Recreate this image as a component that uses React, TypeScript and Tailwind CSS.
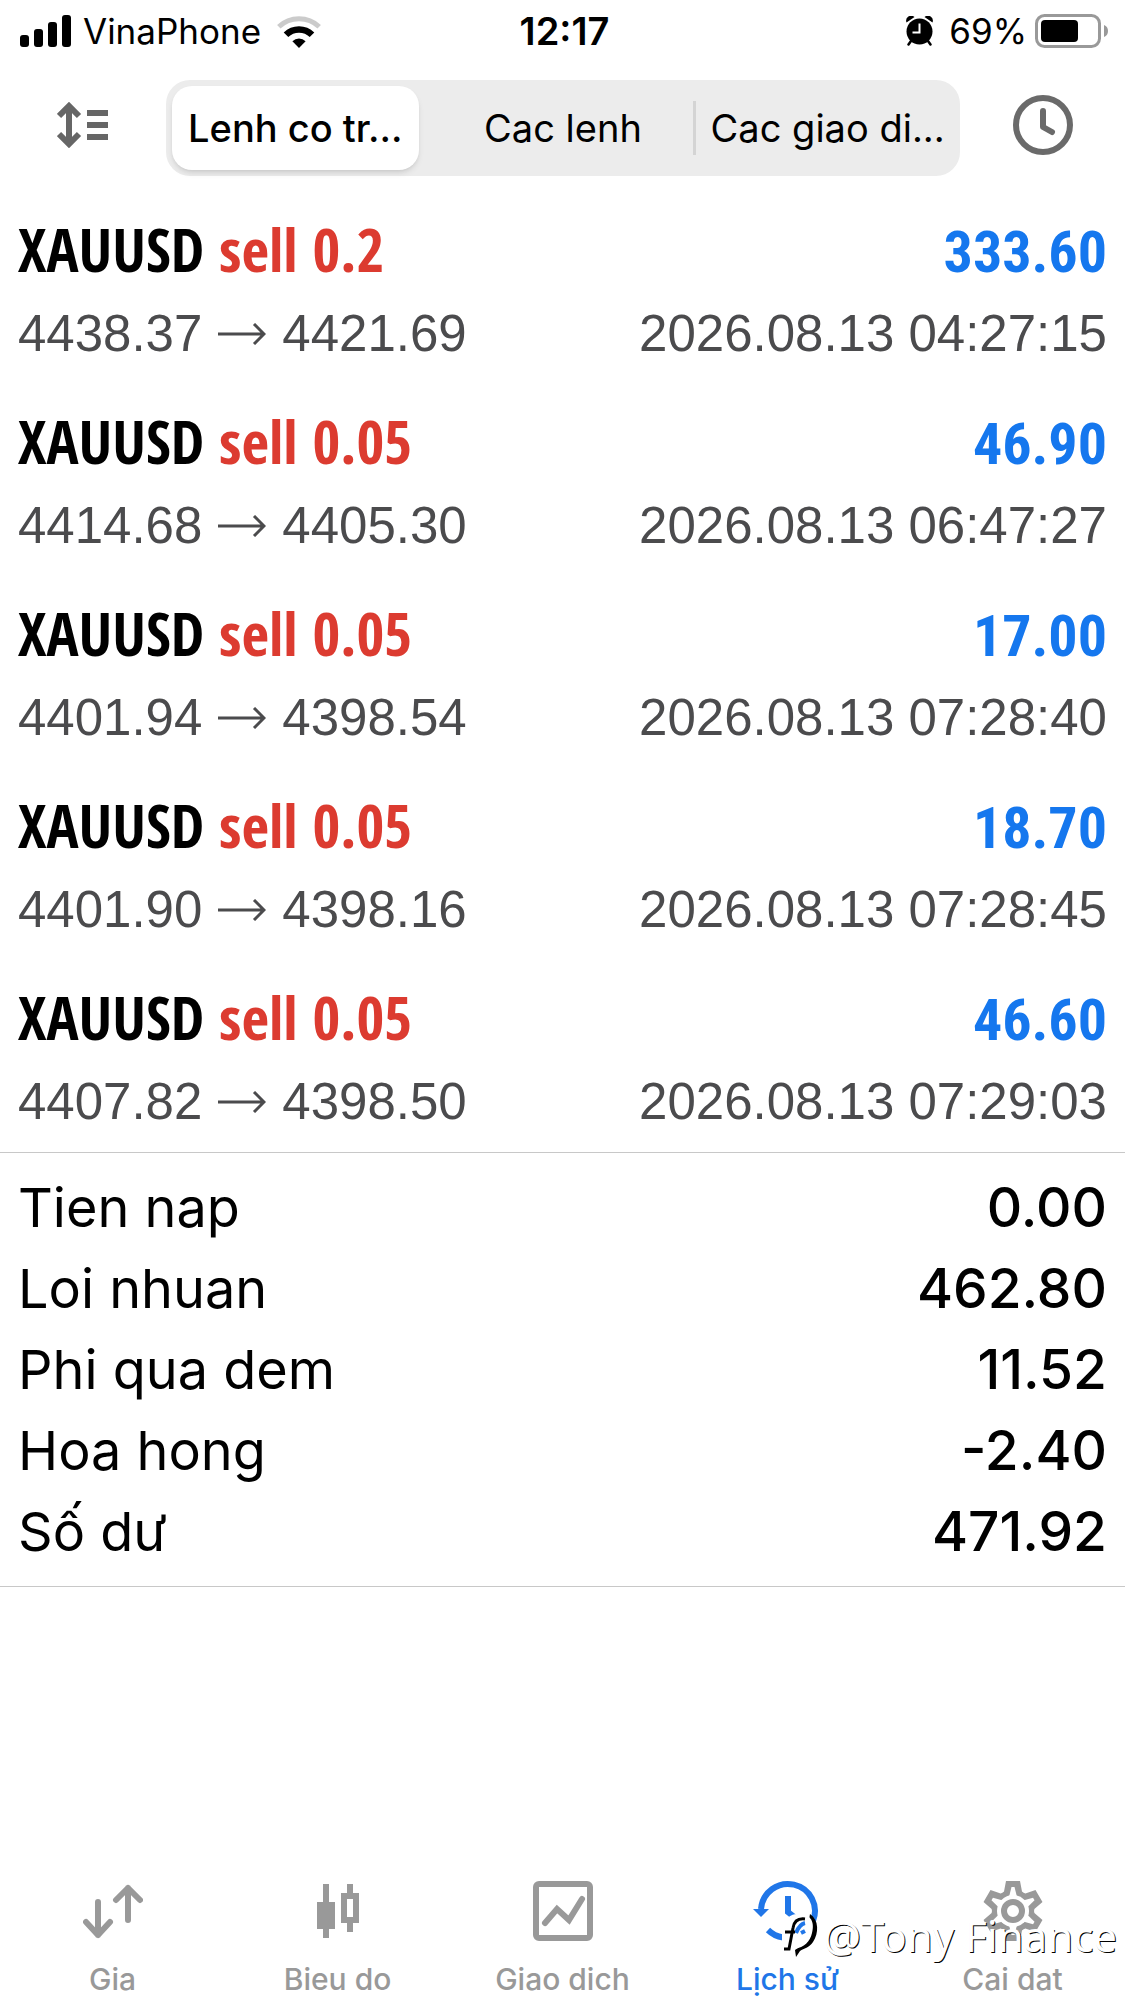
import { useState } from "react";
import type { ReactNode } from "react";

interface Deal {
  symbol: string;
  side: string;
  volume: string;
  open: string;
  close: string;
  time: string;
  profit: string;
}

const deals: Deal[] = [
  { symbol: "XAUUSD", side: "sell", volume: "0.2", open: "4438.37", close: "4421.69", time: "2026.08.13 04:27:15", profit: "333.60" },
  { symbol: "XAUUSD", side: "sell", volume: "0.05", open: "4414.68", close: "4405.30", time: "2026.08.13 06:47:27", profit: "46.90" },
  { symbol: "XAUUSD", side: "sell", volume: "0.05", open: "4401.94", close: "4398.54", time: "2026.08.13 07:28:40", profit: "17.00" },
  { symbol: "XAUUSD", side: "sell", volume: "0.05", open: "4401.90", close: "4398.16", time: "2026.08.13 07:28:45", profit: "18.70" },
  { symbol: "XAUUSD", side: "sell", volume: "0.05", open: "4407.82", close: "4398.50", time: "2026.08.13 07:29:03", profit: "46.60" },
];

const summary = [
  { label: "Tien nap", value: "0.00" },
  { label: "Loi nhuan", value: "462.80" },
  { label: "Phi qua dem", value: "11.52" },
  { label: "Hoa hong", value: "-2.40" },
  { label: "Số dư", value: "471.92" },
];

const segments = ["Lenh co tr...", "Cac lenh", "Cac giao di..."];

function StatusBar() {
  return (
    <div className="grid h-[62px] grid-cols-[1fr_auto_1fr] items-center pr-4 pl-5 text-[35px] leading-[62px]">
      <div className="flex items-center gap-3">
        <svg width="51" height="32" viewBox="0 0 51 32" aria-hidden="true">
          <rect y="20" width="9" height="12" rx="3" />
          <rect x="14" y="14" width="9" height="18" rx="3" />
          <rect x="28" y="7" width="9" height="25" rx="3" />
          <rect x="42" width="9" height="32" rx="3" />
        </svg>
        <span>VinaPhone</span>
        <svg className="ml-1" width="44" height="33" viewBox="0 0 44 33" fill="none" aria-hidden="true">
          <path d="M1.8 11.8A29.5 29.5 0 0 1 42.2 11.8" stroke="#cbcbcb" strokeWidth="5" />
          <path d="M9 19.8A18.5 18.5 0 0 1 35 19.8" stroke="#000" strokeWidth="6.5" />
          <path d="M22 33L15.4 26.2A9.5 9.5 0 0 1 28.6 26.2Z" fill="#000" />
        </svg>
      </div>
      <span className="text-[38px] font-semibold">12:17</span>
      <div className="flex items-center justify-end">
        <svg className="mr-4" width="27" height="30" viewBox="0 0 27 30" aria-hidden="true">
          <path d="M0.5 6.5A5 5 0 0 1 8.5 1ZM26.5 6.5A5 5 0 0 0 18.5 1Z" />
          <circle cx="13.5" cy="15.5" r="13" />
          <path d="M5 25L2.5 28.5M22 25L24.5 28.5" stroke="#000" strokeWidth="2.5" strokeLinecap="round" />
          <path d="M13.5 7.5V16.5H6.5" fill="none" stroke="#fff" strokeWidth="2" />
        </svg>
        <span className="mr-2">69%</span>
        <svg width="74" height="34" viewBox="0 0 74 34" aria-hidden="true">
          <rect x="1.5" y="1.5" width="63" height="31" rx="8" fill="none" stroke="#999" strokeWidth="3" />
          <rect x="6" y="6" width="37" height="22" rx="4" />
          <path d="M69 11A6.5 6.5 0 0 1 69 23Z" fill="#999" />
        </svg>
      </div>
    </div>
  );
}

function Header() {
  const [active, setActive] = useState(0);

  return (
    <header className="grid grid-cols-[166px_1fr_165px] items-start pt-[18px]">
      <button className="flex h-[90px] items-center justify-center" aria-label="Sort">
        <svg width="52" height="46" viewBox="0 0 52 46" fill="none" stroke="#666" strokeWidth="6" aria-hidden="true">
          <path d="M12 4V42M2 14L12 4L22 14M2 32L12 42L22 32M30 11H51M30 23H51M30 35H51" />
        </svg>
      </button>
      <div className="grid h-24 grid-cols-3 rounded-3xl bg-[#ececec]">
        {segments.map((label, i) => (
          <button
            key={label}
            onClick={() => setActive(i)}
            className={`m-[6px] rounded-[20px] text-[38px] whitespace-nowrap ${
              i === active ? "mr-3 bg-white font-medium shadow-md" : ""
            } ${i === 2 ? "relative before:absolute before:top-[15px] before:-left-2 before:h-[54px] before:w-[3px] before:bg-[#d4d4d4]" : ""}`}
          >
            {label}
          </button>
        ))}
      </div>
      <button className="flex h-[90px] items-center justify-center" aria-label="Period">
        <svg width="60" height="60" viewBox="0 0 60 60" fill="none" stroke="#6a6a6a" strokeWidth="6" strokeLinecap="round" strokeLinejoin="round" aria-hidden="true">
          <circle cx="30" cy="30" r="27" />
          <path d="M30 16V32L39 37" />
        </svg>
      </button>
    </header>
  );
}

function DealRow({ deal }: { deal: Deal }) {
  return (
    <li className="h-48 px-[18px] pt-4">
      <div className="flex items-baseline justify-between text-[60px] leading-[82px] font-bold">
        <span className="font-['Open_Sans_Condensed',sans-serif]">
          {deal.symbol}{" "}
          <span className="text-[#dc3b30]">
            {deal.side} {deal.volume}
          </span>
        </span>
        <span className="font-['Roboto_Condensed',sans-serif] text-[58px] text-[#1577ee]">{deal.profit}</span>
      </div>
      <div className="flex justify-between font-['Liberation_Sans',Arial,sans-serif] text-[51px] leading-[82px] text-[#4b4b4d]">
        <span className="flex items-center">
          {deal.open}
          <svg className="mx-4" width="48" height="22" viewBox="0 0 48 22" fill="none" stroke="currentColor" strokeWidth="3" aria-label="to">
            <path d="M0 11H46M36 1L46 11L36 21" />
          </svg>
          {deal.close}
        </span>
        <span>{deal.time}</span>
      </div>
    </li>
  );
}

// one tooth of the gear, repeated every 60 degrees
const toothAngles = [0, 60, 120, 180, 240, 300];

function GearIcon() {
  return (
    <svg width="60" height="60" viewBox="0 0 60 60" aria-hidden="true">
      {toothAngles.map((a) => (
        <path key={a} d="M30 30L15.5 15.2L21 10.5L23 0H37L39 10.5L44.5 15.2Z" fill="currentColor" transform={`rotate(${a} 30 30)`} />
      ))}
      <circle cx="30" cy="30" r="16" fill="#fff" />
      {toothAngles.map((a) => (
        <path key={a} d="M26 16L28.5 6H31.5L34 16Z" fill="#fff" transform={`rotate(${a} 30 30)`} />
      ))}
      <circle cx="30" cy="30" r="9" fill="none" stroke="currentColor" strokeWidth="6" />
    </svg>
  );
}

const tabs: { label: string; icon: ReactNode }[] = [
  {
    label: "Gia",
    icon: (
      <svg width="60" height="60" viewBox="0 0 60 60" fill="none" stroke="currentColor" strokeWidth="6" strokeLinecap="round" strokeLinejoin="round" aria-hidden="true">
        <path d="M15 21V54M3 41L15 54L27 41M45 39V7M33 19L45 7L57 19" />
      </svg>
    ),
  },
  {
    label: "Bieu do",
    icon: (
      <svg width="60" height="60" viewBox="0 0 60 60" fill="currentColor" aria-hidden="true">
        <path d="M15 3H21V21H27V48H21V57H15V48H9V21H15Z" />
        <path fillRule="evenodd" d="M39 3H45V12H51V42H45V51H39V42H33V12H39ZM39 18V36H45V18Z" />
      </svg>
    ),
  },
  {
    label: "Giao dich",
    icon: (
      <svg width="60" height="60" viewBox="0 0 60 60" fill="none" stroke="currentColor" strokeWidth="6" strokeLinecap="round" aria-hidden="true">
        <rect x="3" y="3" width="54" height="54" rx="3" />
        <path d="M12 42L24 28L36 39L49 18" />
      </svg>
    ),
  },
  {
    label: "Lịch sử",
    icon: (
      <svg className="overflow-visible" width="60" height="60" viewBox="0 0 60 60" fill="none" stroke="currentColor" strokeWidth="6" aria-hidden="true">
        <path d="M3 28A27 27 0 1 1 55 40" />
        <path d="M10 49A27 27 0 0 0 25 56.5" />
        <path d="M30 15V31L40 39" />
        <path d="M-5 28H11L3 36Z" fill="currentColor" stroke="none" />
      </svg>
    ),
  },
  { label: "Cai dat", icon: <GearIcon /> },
];

function TabBar() {
  return (
    <nav className="relative mt-auto grid grid-cols-5">
      {tabs.map((tab) => (
        <a
          key={tab.label}
          href="#"
          className={`flex flex-col items-center text-[30px] leading-[44px] font-medium ${
            tab.label === "Lịch sử" ? "text-[#2076e8]" : "text-[#999]"
          }`}
        >
          {tab.icon}
          <span className="mt-4">{tab.label}</span>
        </a>
      ))}
      <div className="pointer-events-none absolute right-2 bottom-[42px] flex items-center">
        <svg className="mr-1" width="38" height="46" viewBox="0 0 38 46" aria-hidden="true">
          <path d="M29 1C38 7 38 20 32 29C28 35 23 35 19 38L15 44L14 37L24 30Z" fill="#000" />
          <path d="M16 1C30 0 34 9 31 20C29 29 23 34 14 36L1 32V12C5 5 10 1 16 1Z" fill="#fff" />
          <path d="M24 10C19 11 17 15 15 20M24 18L20 20" fill="none" stroke="#2076e8" strokeWidth="4" />
          <path d="M24 6C16 5 13 9 12 15L8 36H3M4 19H14" fill="none" stroke="#000" strokeWidth="3" />
        </svg>
        <span className="font-['Noto_Sans',sans-serif] text-[42px] leading-[42px] text-white [text-shadow:1px_1px_0_#000]">
          @Tony Finance
        </span>
      </div>
    </nav>
  );
}

export default function App() {
  return (
    <div className="flex min-h-screen flex-col bg-white font-['Inter',sans-serif] text-black">
      <StatusBar />
      <Header />
      <main className="pt-4">
        <ul>
          {deals.map((deal) => (
            <DealRow key={deal.time} deal={deal} />
          ))}
        </ul>
        <dl className="border-y border-[#c8c8c8] px-[18px] py-[14px] text-[55px] leading-[81px]">
          {summary.map((row) => (
            <div key={row.label} className="flex justify-between">
              <dt className="text-[54px]">{row.label}</dt>
              <dd className="font-medium">{row.value}</dd>
            </div>
          ))}
        </dl>
      </main>
      <TabBar />
    </div>
  );
}
